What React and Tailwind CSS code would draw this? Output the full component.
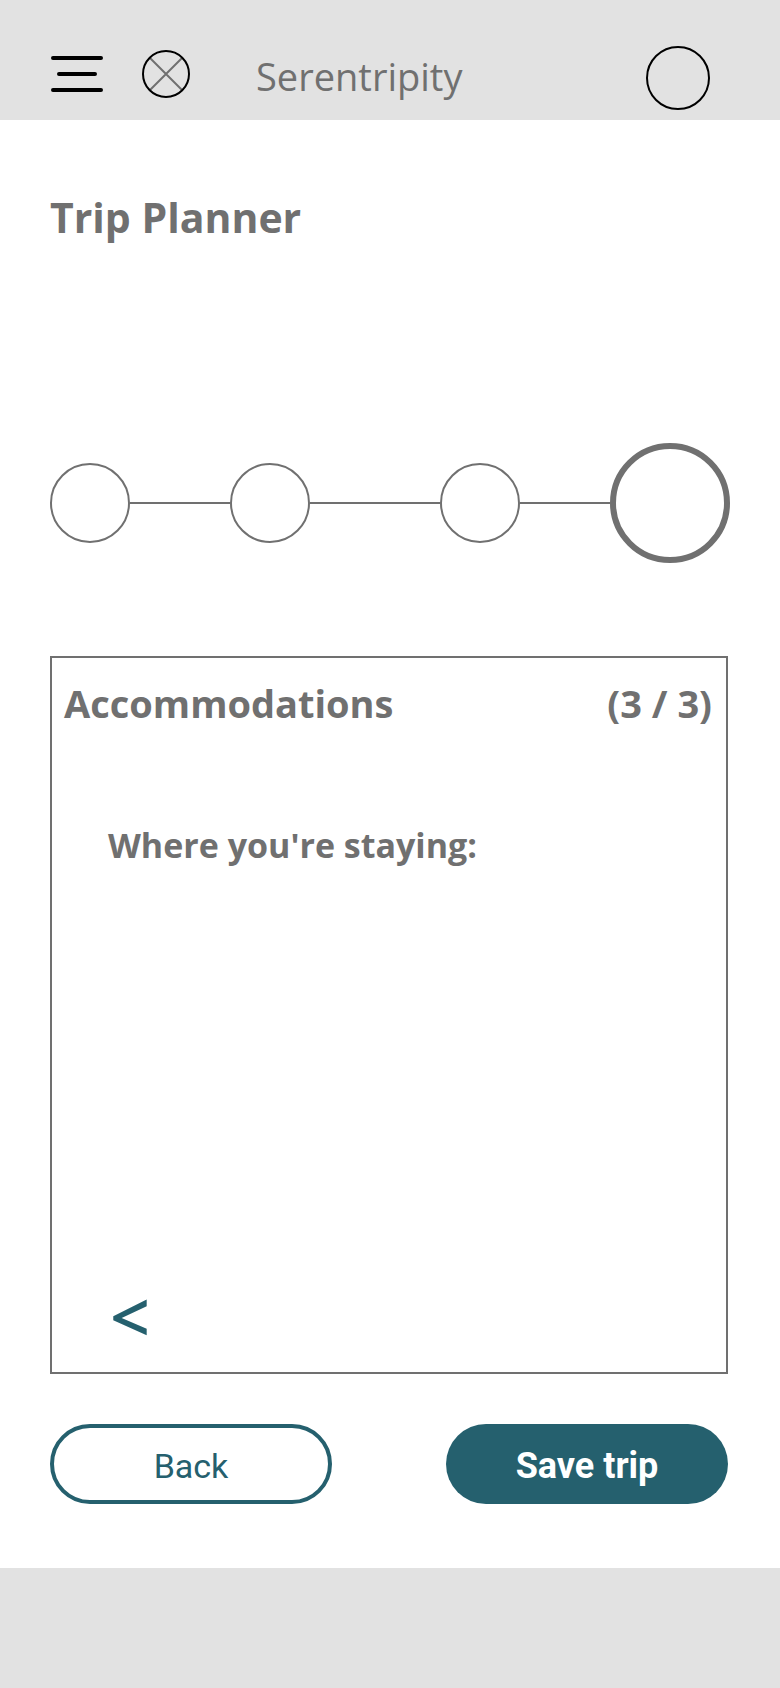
const steps = [
  { name: 'Destination', line: 'grow-[100]' },
  { name: 'Dates', line: 'grow-[130]' },
  { name: 'Activities', line: 'grow-[90]' },
  { name: 'Accommodations', current: true },
];

function Header() {
  return (
    <header className="flex h-[120px] items-end bg-[#e2e2e2] pr-[70px] pb-[10px] pl-[50px]">
      <button type="button" aria-label="Open menu" className="mb-[18px]">
        <svg width="54" height="36" viewBox="0 0 54 36" fill="none" stroke="#000" strokeWidth="4" strokeLinecap="round">
          <path d="M3 2H51M9 18H45M3 34H51" />
        </svg>
      </button>
      <a href="#home" aria-label="Home" className="mb-3 ml-[38px]">
        <svg width="48" height="48" viewBox="0 0 48 48" fill="none" strokeWidth="2">
          <path d="M8 8L40 40M40 8L8 40" stroke="#707070" />
          <circle cx="24" cy="24" r="23" stroke="#000" />
        </svg>
      </a>
      <p className="mb-2 ml-[66px] text-[38px] leading-[52px]">Serentripity</p>
      <button type="button" aria-label="Profile" className="ml-auto size-16 rounded-full border-2 border-black" />
    </header>
  );
}

function Progress() {
  return (
    <ol className="mt-[196px] flex items-center pr-[50px] pl-[50px]">
      {steps.map((step) => (
        <li key={step.name} className={step.current ? 'flex' : `flex items-center basis-20 ${step.line}`}>
          <button
            type="button"
            aria-label={step.name}
            aria-current={step.current ? 'step' : undefined}
            className={
              step.current
                ? 'size-[120px] shrink-0 rounded-full border-6 border-[#707070]'
                : 'size-20 shrink-0 rounded-full border-2 border-[#707070]'
            }
          />
          {step.line && <span className="h-[2px] flex-1 bg-[#707070]" />}
        </li>
      ))}
    </ol>
  );
}

export default function App() {
  return (
    <div className="flex min-h-screen flex-col bg-white font-['Open_Sans','Noto_Sans',sans-serif] text-[#707070]">
      <Header />
      <main className="flex flex-1 flex-col pb-16">
        <h1 className="mt-[67px] pl-[50px] text-[41px] leading-[60px] font-bold">Trip Planner</h1>
        <Progress />
        <section className="mt-[93px] mr-[52px] ml-[50px] flex min-h-[718px] flex-1 flex-col border-2 border-[#707070]">
          <div className="flex justify-between pt-[18px] pr-[14px] pl-3 text-[38px] leading-[54px] font-bold">
            <h2>Accommodations</h2>
            <p>(3 / 3)</p>
          </div>
          <h3 className="mt-[91px] pl-14 text-[34px] leading-[48px] font-bold">Where you're staying:</h3>
          <button type="button" aria-label="Previous" className="mt-auto mb-4 ml-[58px] self-start text-[70px] leading-[80px] font-semibold text-[#25606e]">
            &lt;
          </button>
        </section>
        <div className="mt-[50px] mr-[52px] ml-[50px] flex justify-between gap-8 font-[Roboto,sans-serif] text-[#25606e]">
          <button type="button" className="h-20 w-[282px] rounded-full border-4 border-[#25606e] pt-1 text-[34px]">
            Back
          </button>
          <button type="button" className="h-20 w-[282px] rounded-full bg-[#25606e] pt-1 text-[36px] font-bold text-white">
            Save trip
          </button>
        </div>
      </main>
      <footer className="h-[120px] bg-[#e2e2e2]" />
    </div>
  );
}
